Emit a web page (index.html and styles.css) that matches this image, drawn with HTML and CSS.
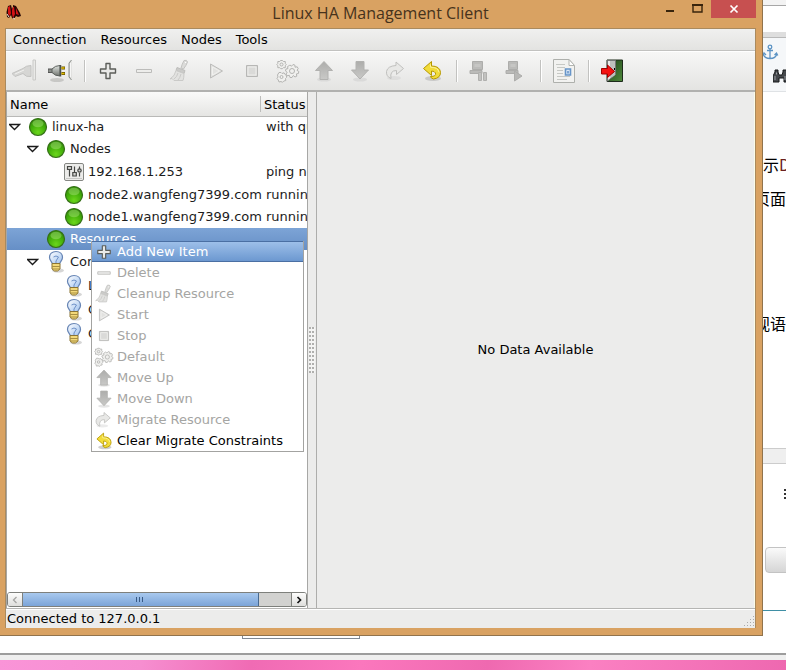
FILE: index.html
```html
<!DOCTYPE html>
<html lang="en">
<head>
<meta charset="utf-8">
<title>Linux HA Management Client</title>
<link rel="stylesheet" href="styles.css">
</head>
<body>
<svg class="defs" aria-hidden="true">
  <defs>
    <radialGradient id="gGreen" cx="0.5" cy="0.8" r="0.75"><stop offset="0" stop-color="#6bd61c"/><stop offset="0.6" stop-color="#42ae0a"/><stop offset="1" stop-color="#328c08"/></radialGradient>
    <linearGradient id="gGrey" x1="0" y1="0" x2="0" y2="1"><stop offset="0" stop-color="#adadab"/><stop offset="1" stop-color="#c9c9c7"/></linearGradient>
    <linearGradient id="gPlug" x1="0" y1="0" x2="0" y2="1"><stop offset="0" stop-color="#e0e4e0"/><stop offset="1" stop-color="#70746f"/></linearGradient>
    <linearGradient id="gDoor" x1="0" y1="0" x2="1" y2="1"><stop offset="0" stop-color="#1d3f18"/><stop offset="1" stop-color="#4f8a3c"/></linearGradient>
    <linearGradient id="gBulb" x1="0" y1="0" x2="1" y2="1"><stop offset="0" stop-color="#ffffff"/><stop offset="1" stop-color="#9cc0ee"/></linearGradient>
    <symbol id="plug-off" viewBox="0 0 24 24"><path d="M0 14.500 11 9.500q3-3 8-3v11q-5 1-8-3l-8 3z" fill="#d6d6d4" stroke="#c3c3c1"/><path d="M3 15l9-4" stroke="#f1f1ef"/><path d="M21 1v20h2.500V1z" fill="#e9e9e7" stroke="#c9c9c7"/></symbol>
    <symbol id="plug-on" viewBox="0 0 24 24"><ellipse cx="9" cy="21" rx="7" ry="2" fill="#b9b9b7" opacity=".7"/><path d="M0 10h5v3.500H0z" fill="#8a8e89" stroke="#555"/><path d="M4 10q3-3.500 8-3.500v10.500q-5 0-8-3.500z" fill="url(#gPlug)" stroke="#5c605c"/><path d="M12.500 6v11.500" stroke="#4c504c" stroke-width="1.500"/><path d="M13.500 9h3.500M13.500 14.500h3.500" stroke="#645000" stroke-width="3"/><path d="M13.500 9h3M13.500 14.500h3" stroke="#e4bf00" stroke-width="1.400"/><path d="M23.500 1 21 4v14l2.500 3" fill="#d5d5d3" stroke="#8a8e8a"/><path d="M22.500 4v14" stroke="#f6f6f5"/></symbol>
    <symbol id="plus" viewBox="0 0 24 24"><path d="M10 4.500h4V10h5.500v4H14v5.500h-4V14H4.500v-4H10z" fill="#e9e9e7" stroke="#5c5e5a" stroke-width="1.400" stroke-linejoin="round"/></symbol>
    <symbol id="minus" viewBox="0 0 24 24"><path d="M4.500 10.500h15v3h-15z" fill="#ededeb" stroke="#bcbcba" stroke-linejoin="round"/></symbol>
    <symbol id="broom" viewBox="0 0 24 24"><path d="M13 9q1-4 3-7.500 3-1 3.500 1.500-1 3-4 7z" fill="#dcdcda" stroke="#c3c3c1"/><path d="M17 3.500h1.200" stroke="#fff"/><path d="M9 8.500l8 3-1 3-8-3z" fill="#cbcbc9" stroke="#bebebc"/><path d="M8 11.500l8 3q0 4-1 7H6l-2-2-2 .5q5-3 6-8.500z" fill="#e2e2e0" stroke="#cacac8"/><path d="M10 14q-1 4-4 6M13 15q-1 4-3 6" stroke="#cacac8" fill="none"/></symbol>
    <symbol id="play" viewBox="0 0 24 24"><path d="M6.500 5v14l12-7z" fill="#e2e2e0" stroke="#bcbcba" stroke-linejoin="round"/><path d="M8.500 8v8l7-4z" fill="none" stroke="#f1f1ef"/></symbol>
    <symbol id="stop" viewBox="0 0 24 24"><path d="M6.500 6.500h11v11h-11z" fill="#dadad8" stroke="#b7b7b5"/><path d="M8 8h8v8H8z" fill="none" stroke="#eeeeec"/></symbol>
    <symbol id="gears" viewBox="0 0 24 24"><g fill="#f0f0ee" stroke="#b4b4b2"><path d="M4.500 1.500h2l.8 1h2v2l1 1.200-1 1v2h-2l-1 1h-1.500l-1-1h-2v-2l-1-1 1-1.200v-2h2zM3 13.500h2l1 1 2-.7 1 1.700 1.500 1v2l-1 1 .3 2-2 .5-1.300 1.300-1.500-.8-2 .5-.7-2-1.300-1.500 1-1.500-.5-2z"/><path d="M14 6l1.500 1.200L17 5.500l2 .7v2l2.200-.4 1 1.800-1.200 1.700 1.800 1.200-.4 2-2 .4.4 2.300-1.800.8-1.700-1.500-1.300 2h-2l-.7-2.200-2.300.5-1-1.800 1.200-1.700-1.700-1.300.5-2 2-.4-.5-2 1.700-1z"/><circle cx="5.500" cy="5.500" r="1.500"/><circle cx="5.500" cy="18" r="1.500"/><circle cx="16" cy="12" r="2.500"/></g></symbol>
    <symbol id="up" viewBox="0 0 24 24"><ellipse cx="12" cy="20.500" rx="7" ry="2" fill="#ccc" opacity=".5"/><path d="M12 2.500l8.500 9H16v9H8v-9H3.500z" fill="url(#gGrey)" stroke="#b2b2b0" stroke-linejoin="round"/></symbol>
    <symbol id="down" viewBox="0 0 24 24"><ellipse cx="12" cy="20.500" rx="7" ry="2" fill="#ccc" opacity=".5"/><path d="M12 20l8.500-9H16V2.500H8V11H3.500z" fill="url(#gGrey)" stroke="#b2b2b0" stroke-linejoin="round"/></symbol>
    <symbol id="redo" viewBox="0 0 24 24"><ellipse cx="10" cy="19" rx="7" ry="2" fill="#ccc" opacity=".4"/><path d="M12 3l7.500 6.500-7 6v-4q-7 0-5.500 8-5-2-4.500-7 1-5.500 9.500-6z" fill="#e8e8e6" stroke="#c0c0be" stroke-linejoin="round"/></symbol>
    <symbol id="undo" viewBox="0 0 24 24"><ellipse cx="13" cy="19.500" rx="8" ry="2.500" fill="#bbb" opacity=".7"/><path d="M11.500 2.500V7q8.500 0 9 6.500 0 5.500-7 6.500-3-1-3-2.500 6 0 5-3.500-1-2-4-2v4.500L3.500 9.500z" fill="#f2dc3a" stroke="#b69800" stroke-linejoin="round"/><path d="M10.500 5.500v2.700q7.500 0 8.500 5" fill="none" stroke="#fbf29d"/></symbol>
    <symbol id="standby" viewBox="0 0 24 24"><path d="M4.500 2.500h10v8h-10zM2 11.500h12v3H2z" fill="#bbbbb9" stroke="#adadab"/><path d="M6.500 5h6v3h-6z" fill="#c6c6c4"/><path d="M10.500 13.500h3v8h-3zM15.500 13.500h3v8h-3z" fill="#c2c2c0" stroke="#b0b0ae"/></symbol>
    <symbol id="active" viewBox="0 0 24 24"><path d="M4.500 2.500h9v8h-9zM2 11.500h12v3H2z" fill="#bbbbb9" stroke="#adadab"/><path d="M6.500 5h5v3h-5z" fill="#c6c6c4"/><path d="M10.500 12v10l7.500-5z" fill="#b8b8b6" stroke="#adadab"/></symbol>
    <symbol id="report" viewBox="0 0 24 24"><path d="M1.500.500H17l5.500 6v17h-21z" fill="#f2f2f0" stroke="#aeb0ac" stroke-linejoin="round"/><path d="M17 .500v6h5.500z" fill="#fff" stroke="#b2b4b0"/><path d="M4 5.500h9M5 8.500h8M5 11.500h6M5 14.500h6M5 17.500h13M5 20.500h10" stroke="#c6c8c4"/><path d="M13.500 10h5v6h-5z" fill="#dbe8f6" stroke="#6795c8" stroke-width="1.600"/><path d="M15 12h2v2.500h-2z" fill="#7fa5d2"/></symbol>
    <symbol id="exit" viewBox="0 0 24 24"><path d="M7 1h15.500v21.500H7z" fill="url(#gDoor)" stroke="#1d2a1b"/><path d="M7.500 1.500h8v14l-8 6.500z" fill="#e8e8e6" stroke="#777"/><path d="M10 2h5v14l-5 3z" fill="#bfc0bd"/><path d="M14.500 9v2" stroke="#000"/><path d="M1.500 9.500h6V6l7 6.500-7 6v-3.500h-6z" fill="#f51212" stroke="#a30000" stroke-linejoin="round"/></symbol>
    <symbol id="ball" viewBox="0 0 20 20"><circle cx="10" cy="10" r="8.500" fill="url(#gGreen)" stroke="#356f18" stroke-width="1.200"/><ellipse cx="10" cy="6.500" rx="5.500" ry="3.800" fill="#b9ec8d" opacity=".4"/></symbol>
    <symbol id="ping" viewBox="0 0 20 20"><rect x=".500" y="1.500" width="19" height="17" rx="1.500" fill="#ececea" stroke="#858783"/><path d="M2 16.500h16" stroke="#c7c7c5"/><g fill="#d0d0ce" stroke="#454744" stroke-width="1.200"><path d="M3.500 4.500v3h4v-3zM5.500 8v6.500M10.500 4.500v6M8.800 10.500h3.500v3.500H8.800zM15.500 4.500v3M15.500 11v3.500"/><circle cx="15.500" cy="8.500" r="1.700"/></g></symbol>
    <symbol id="bulb" viewBox="0 0 20 24"><ellipse cx="12" cy="20.500" rx="6" ry="2" fill="#bbb" opacity=".6"/><path d="M10 1.500C6 1.500 3.500 4 3.500 7.500c0 3 3 4.500 3 7h7c0-2.500 3-4 3-7 0-3.500-2.500-6-6.500-6z" fill="url(#gBulb)" stroke="#6684b4" stroke-width="1.200"/><path d="M7.500 7q2.500-2 5 0l-2.500 4v2" fill="none" stroke="#6e91c8"/><path d="M6 13.500h8V19l-2.500 2h-3L6 19z" fill="#f3d979" stroke="#8b7434"/><path d="M6 16.500h8M6 19h8" stroke="#a88f42"/></symbol>
  </defs>
</svg>

<div class="desktop">
  <main class="window">
    <header class="titlebar">
      <svg class="logo" viewBox="0 0 16 16"><path d="M2 2l3-1 1 4 1-2V1l3 1 4 7 1 3-3 1-2-1-2 3-2-1-1-3-2 3-2-1-.500-5z" fill="#260604"/><path d="M2 3l2-1 1 7-1 3-2-2zM6 6l1-3h1l1 7-2 4-1-4zM10 4l3 7-3-1z" fill="#d41416"/><path d="M1 10l2 3M7 14l2 1" stroke="#f4e6d8"/></svg>
      <h1>Linux HA Management Client</h1>
      <div class="controls">
        <button aria-label="Minimize"><svg width="11" height="12"><path d="M1 10h8" stroke="#38240c" stroke-width="2"/></svg></button>
        <button aria-label="Maximize"><svg width="11" height="12"><path d="M1 4h9v7H1z" fill="none" stroke="#38240c" stroke-width="1.400"/><path d="M0 4h11" stroke="#38240c" stroke-width="2"/></svg></button>
        <button class="close" aria-label="Close"><svg width="10" height="10"><path d="M1.500 1.500l7 7m0-7l-7 7" stroke="#fff" stroke-width="1.700"/></svg></button>
      </div>
    </header>

    <div class="client">
      <nav class="menubar">
        <button>Connection</button><button>Resources</button><button>Nodes</button><button>Tools</button>
      </nav>

      <div class="toolbar" role="toolbar">
        <button disabled aria-label="Login"><svg><use href="#plug-off"/></svg></button>
        <button aria-label="Logout"><svg><use href="#plug-on"/></svg></button>
        <i class="sep"></i>
        <button aria-label="Add New Item"><svg><use href="#plus"/></svg></button>
        <button disabled aria-label="Delete"><svg><use href="#minus"/></svg></button>
        <button disabled aria-label="Cleanup Resource"><svg><use href="#broom"/></svg></button>
        <button disabled aria-label="Start"><svg><use href="#play"/></svg></button>
        <button disabled aria-label="Stop"><svg><use href="#stop"/></svg></button>
        <button disabled aria-label="Default"><svg><use href="#gears"/></svg></button>
        <button disabled aria-label="Move Up"><svg><use href="#up"/></svg></button>
        <button disabled aria-label="Move Down"><svg><use href="#down"/></svg></button>
        <button disabled aria-label="Migrate Resource"><svg><use href="#redo"/></svg></button>
        <button aria-label="Clear Migrate Constraints"><svg><use href="#undo"/></svg></button>
        <i class="sep"></i>
        <button disabled aria-label="Standby"><svg><use href="#standby"/></svg></button>
        <button disabled aria-label="Active"><svg><use href="#active"/></svg></button>
        <i class="sep"></i>
        <button aria-label="Report"><svg><use href="#report"/></svg></button>
        <i class="sep"></i>
        <button aria-label="Exit"><svg><use href="#exit"/></svg></button>
      </div>

      <div class="panes">
        <section class="left">
          <div class="treebox">
            <table class="tree">
              <thead><tr><th class="name">Name</th><th>Status</th></tr></thead>
              <tbody>
                <tr><td><div class="cell"><svg class="exp"><path d="M.500 3.500h10l-5 5z"/></svg><svg class="ico"><use href="#ball"/></svg>linux-ha</div></td><td>with quorum</td></tr>
                <tr><td><div class="cell l1"><svg class="exp"><path d="M.500 3.500h10l-5 5z"/></svg><svg class="ico"><use href="#ball"/></svg>Nodes</div></td><td></td></tr>
                <tr class="tall"><td><div class="cell l2"><span class="exp"></span><svg class="ico"><use href="#ping"/></svg>192.168.1.253</div></td><td>ping node</td></tr>
                <tr><td><div class="cell l2"><span class="exp"></span><svg class="ico"><use href="#ball"/></svg>node2.wangfeng7399.com</div></td><td>running</td></tr>
                <tr><td><div class="cell l2"><span class="exp"></span><svg class="ico"><use href="#ball"/></svg>node1.wangfeng7399.com</div></td><td>running</td></tr>
                <tr class="selected"><td><div class="cell l1"><span class="exp"></span><svg class="ico"><use href="#ball"/></svg>Resources</div></td><td></td></tr>
                <tr class="tall"><td><div class="cell l1"><svg class="exp"><path d="M.500 3.500h10l-5 5z"/></svg><svg class="ico"><use href="#bulb"/></svg>Constraints</div></td><td></td></tr>
                <tr class="tall"><td><div class="cell l2"><span class="exp"></span><svg class="ico"><use href="#bulb"/></svg>Locations</div></td><td></td></tr>
                <tr class="tall"><td><div class="cell l2"><span class="exp"></span><svg class="ico"><use href="#bulb"/></svg>Orders</div></td><td></td></tr>
                <tr class="tall"><td><div class="cell l2"><span class="exp"></span><svg class="ico"><use href="#bulb"/></svg>Colocations</div></td><td></td></tr>
              </tbody>
            </table>
          </div>
          <div class="scrollbar">
            <button aria-label="Scroll left"><svg width="8" height="10"><path d="M5.500 2L2.500 5l3 3" fill="none" stroke="#a5a5a3" stroke-width="1.300"/></svg></button>
            <div class="track"><div class="thumb"><svg width="8" height="6"><path d="M.500 0v5M3.500 0v5M6.500 0v5" stroke="#375a86"/></svg></div></div>
            <button aria-label="Scroll right"><svg width="8" height="10"><path d="M2.500 2l3 3-3 3" fill="none" stroke="#111" stroke-width="1.700"/></svg></button>
          </div>
          <div class="context" role="menu">
            <button class="hot" role="menuitem"><svg><use href="#plus"/></svg>Add New Item</button>
            <button disabled role="menuitem"><svg><use href="#minus"/></svg>Delete</button>
            <button disabled role="menuitem"><svg><use href="#broom"/></svg>Cleanup Resource</button>
            <button disabled role="menuitem"><svg><use href="#play"/></svg>Start</button>
            <button disabled role="menuitem"><svg><use href="#stop"/></svg>Stop</button>
            <button disabled role="menuitem"><svg><use href="#gears"/></svg>Default</button>
            <button disabled role="menuitem"><svg><use href="#up"/></svg>Move Up</button>
            <button disabled role="menuitem"><svg><use href="#down"/></svg>Move Down</button>
            <button disabled role="menuitem"><svg><use href="#redo"/></svg>Migrate Resource</button>
            <button role="menuitem"><svg><use href="#undo"/></svg>Clear Migrate Constraints</button>
          </div>
        </section>
        <div class="splitter"><i></i></div>
        <section class="right">No Data Available</section>
      </div>

      <footer class="status"><span>Connected to 127.0.0.1</span><svg width="12" height="12"><g stroke="#aaa" stroke-dasharray="1 2"><path d="M10 1.500h1M7 4.500h5M4 7.500h8M1 10.500h11"/></g></svg></footer>
    </div>
  </main>

  <aside class="behind">
    <div class="tabs"></div>
    <div class="address"></div>
    <div class="editbar">
      <svg width="16" height="16" viewBox="0 0 16 16"><g fill="none" stroke="#5c93c4" stroke-width="1.300"><circle cx="7" cy="3" r="1.800"/><path d="M7 5v9M4 6.500h6M.200 10q1 4.500 6.800 4.500T13.800 10M0 11.500L1 9l2 2M11.500 11l2-2 1.300 2.500"/></g></svg>
      <svg class="bino" width="16" height="16" viewBox="0 0 16 16"><path d="M2 2h3v2l1 3h3l1-3V2h4v2l2 4v6h-5v-4H6v4H0V8l2-4z" fill="#45484c" stroke="#17191b"/><path d="M2 8v4M12 8v4M3.500 4.500v2" stroke="#9a9ea4"/></svg>
    </div>
    <div class="article">
      <p class="from-start">示<span>D</span></p>
      <p>首页面</p>
      <p class="later">电视语</p>
    </div>
    <div class="band"></div>
    <div class="form"><i class="dots"></i><button aria-label="Submit"></button></div>
  </aside>

  <div class="below"><div class="field"></div><div class="edge"></div><div class="wallpaper"></div></div>
</div>
</body>
</html>
```

FILE: styles.css
```css
* { box-sizing: border-box; }
body { margin: 0; font: 13px/16px "DejaVu Sans", sans-serif; color: #000; background: #fff; }
button { font: inherit; color: inherit; border: 0; padding: 0; margin: 0; background: none; }
svg { display: block; flex: none; }
.defs { position: absolute; width: 0; height: 0; }

.desktop { min-height: 100vh; display: grid; grid-template-columns: minmax(0, 1fr) 23px; grid-template-rows: minmax(0, 1fr) auto; }

/* application window */
.window { display: flex; flex-direction: column; padding: 0 6px 7px 5px; background: #d9a262; border: solid #91734c; border-width: 0 1px 1px 0; }
.titlebar { height: 28px; display: grid; grid-template-columns: 1fr auto 1fr; align-items: start; }
.logo { width: 16px; height: 16px; margin: 4px 1px; }
.titlebar h1 { margin: 0; font: 16px/26px "Open Sans", sans-serif; color: #46321c; }
.controls { display: flex; justify-content: flex-end; height: 18px; }
.controls button { width: 27px; display: flex; justify-content: center; align-items: flex-start; padding-top: 1px; }
.controls .close { width: 45px; background: #c75050; align-items: center; padding: 0; }

.client { flex: 1; display: flex; flex-direction: column; background: #ececeb; border: 1px solid #aa8a5e; border-bottom: 0; }
.menubar { height: 22px; display: flex; background: linear-gradient(#f0f0ef, #e3e3e1); border-bottom: 1px solid #c2c2c0; }
.menubar button { padding: 0 7px; }
.toolbar { height: 41px; display: flex; align-items: center; background: linear-gradient(#f7f7f6, #e4e4e2); border-top: 1px solid #fff; border-bottom: 2px solid #b1b1af; }
.toolbar button { width: 36px; height: 36px; display: grid; place-items: center; }
.toolbar svg { width: 24px; height: 24px; }
.sep { width: 12px; height: 22px; background: linear-gradient(#c2c2c0, #c2c2c0) 6px 0 / 1px 100% no-repeat, linear-gradient(#fff, #fff) 7px 0 / 1px 100% no-repeat; }

.panes { flex: 1; display: flex; border-bottom: 1px solid #b5b5b3; }
.left { position: relative; width: 302px; display: flex; flex-direction: column; background: #fff; border: solid #a7a7a5; border-width: 0 1px; }
.treebox { flex: 1; overflow: hidden; }
.tree { width: 340px; table-layout: fixed; border-collapse: collapse; }
.tree th { height: 24px; padding: 2px 0 0 3px; text-align: left; font-weight: 400; background: linear-gradient(#fafaf9, #e5e5e3); border-bottom: 1px solid #b9b9b7; }
.tree th.name { width: 254px; background: linear-gradient(#bdbdbb, #bdbdbb) 253px 50% / 1px 16px no-repeat, linear-gradient(#fafaf9, #e5e5e3); }
.tree td { height: 22px; padding: 0 0 0 5px; white-space: nowrap; color: #1c1c1c; }
.tree td:first-child { padding-left: 2px; }
.tree .tall td { height: 24px; }
.tree .selected td { background: linear-gradient(#7da4d6, #668fc6); color: #fff; }
.cell { display: flex; align-items: center; }
.cell.l1 { padding-left: 18px; }
.cell.l2 { padding-left: 36px; }
.exp { flex: none; width: 12px; height: 12px; margin-right: 7px; fill: #fff; stroke: #1a1a1a; stroke-width: 1.3; }
.ico { width: 20px; height: 20px; margin-right: 4px; }
.tall .ico { height: 24px; }

.scrollbar { display: flex; height: 15px; margin-bottom: 1px; border: 1px solid #7e807c; border-radius: 3px; overflow: hidden; }
.scrollbar button { width: 14px; display: grid; place-items: center; background: linear-gradient(#fdfdfc, #dededc); }
.track { flex: 1; display: flex; background: #d2d2d0; border: solid #7e807c; border-width: 0 1px; }
.thumb { width: 88%; display: grid; place-items: center; background: linear-gradient(#a9c9ee, #7ba4d8); border-right: 1px solid #47698f; }

.context { position: absolute; left: 84px; top: 149px; width: 213px; background: #fff; border: 1px solid #a3a3a1; border-top: 0; }
.context button { width: 100%; height: 21px; display: flex; align-items: center; gap: 3px; padding: 0 2px; color: #000; white-space: nowrap; }
.context button:disabled { color: #a5a5a3; }
.context .hot { color: #fff; background: linear-gradient(#9dbfe9, #6c98d0); border: solid #4a6fa3; border-width: 1px 0; }
.context svg { width: 20px; height: 20px; }

.splitter { width: 9px; display: grid; place-items: center; background: #ececeb; border-right: 1px solid #adadab; }
.splitter i { width: 6px; height: 46px; background: radial-gradient(circle at 1px 1px, #b0b0ae 0 1px, #f5f5f4 1px) 0 0 / 3px 4px; }
.right { flex: 1; display: grid; place-items: center; background: #ececeb; border-right: 1px solid #fbfbe9; }
.status { height: 19px; display: flex; justify-content: space-between; align-items: flex-end; padding: 0 0 1px 1px; border-top: 1px solid #fff; }
.status span { align-self: center; }

/* page partly hidden behind the window */
.behind { display: flex; flex-direction: column; overflow: hidden; border-bottom: 25px solid #fff; background: #fff; }
.tabs { height: 6px; background: #f3f3f3; border-bottom: 1px solid #a7a7a7; }
.address { height: 31px; border-bottom: 5px solid #dedede; }
.editbar { height: 55px; padding-top: 6px; background: #f5f7f9; border-top: 1px solid #b9b9b9; border-bottom: 1px solid #dfe2e5; overflow: hidden; }
.bino { margin: 8px 0 0 10px; }
.article { height: 356px; padding-top: 62px; font: 16px/20px "Noto Sans CJK SC", sans-serif; }
.article p { display: flex; justify-content: flex-end; margin: 0 0 14px; white-space: nowrap; overflow: hidden; }
.article .from-start { justify-content: flex-start; }
.article span { color: #6a2020; }
.article .later { margin-top: 105px; }
.band { height: 16px; background: #efefef; border: solid #ccc; border-width: 1px 0; }
.form { flex: 1; border-bottom: 1px solid #3f8fa5; }
.dots { display: block; width: 2px; height: 10px; margin: 25px 0 48px 21px; background: repeating-linear-gradient(#333 0 2px, #fff 2px 4px); }
.form button { display: block; width: 40px; height: 26px; margin-left: 2px; background: linear-gradient(#fafafa, #d5d5d5); border: 1px solid #c3c3c3; border-radius: 4px; }

.below { grid-column: 1 / -1; }
.field { height: 3px; width: 118px; margin: 0 0 14px 242px; border: 1px solid #7e8894; border-top: 0; }
.edge { height: 7px; background: #efefef; border-top: 2px solid #9d9d9d; }
.wallpaper { height: 10px; background: linear-gradient(100deg, #fa94d8, #f68ed0 18%, #f06bb4 32%, #fb77bd 46%, #ef69b0 62%, #fb80c2 75%, #ee68b0); }
```
